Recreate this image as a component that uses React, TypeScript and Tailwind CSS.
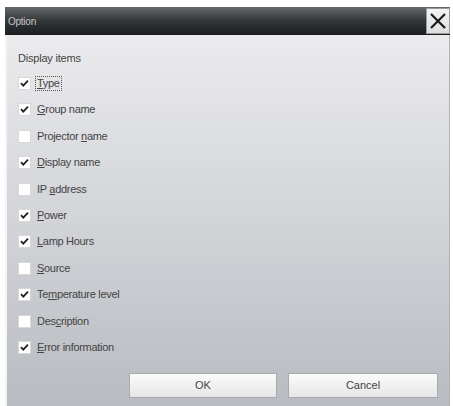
import React from "react";

type Item = { pre: string; key: string; post: string; checked: boolean; focus?: boolean };

const items: Item[] = [
  { pre: "", key: "T", post: "ype", checked: true, focus: true },
  { pre: "", key: "G", post: "roup name", checked: true },
  { pre: "Projector ", key: "n", post: "ame", checked: false },
  { pre: "", key: "D", post: "isplay name", checked: true },
  { pre: "IP ", key: "a", post: "ddress", checked: false },
  { pre: "", key: "P", post: "ower", checked: true },
  { pre: "", key: "L", post: "amp Hours", checked: true },
  { pre: "", key: "S", post: "ource", checked: false },
  { pre: "Te", key: "m", post: "perature level", checked: true },
  { pre: "Des", key: "c", post: "ription", checked: false },
  { pre: "", key: "E", post: "rror information", checked: true },
];

function Check({ checked }: { checked: boolean }) {
  return (
    <div className="w-[13px] h-[13px] bg-white border border-[#d8d8d8] flex items-center justify-center">
      {checked && (
        <svg width="9" height="9" viewBox="0 0 9 9">
          <path d="M1 4.2 L3.3 6.6 L8 1.6" stroke="#222" strokeWidth="1.8" fill="none" />
        </svg>
      )}
    </div>
  );
}

export default function App() {
  return (
    <div
      className="w-[453px] h-[406px] bg-white pt-[7px] pl-[5px] pr-[3px] overflow-hidden"
      style={{ fontFamily: '"Liberation Sans", Arial, sans-serif' }}
    >
      <div className="h-[399px] flex flex-col">
        <div className="h-[28px] flex items-center justify-between bg-gradient-to-b from-[#65696b] via-[#33373a] to-[#1a1e20] pl-[3px]">
          <span className="text-[10px] text-[#c4c6c8] tracking-tight">Option</span>
          <div className="w-[24px] h-[26px] bg-gradient-to-b from-[#f4f4f4] to-[#dedede] border border-[#9a9a9a] flex items-center justify-center">
            <svg width="18" height="18" viewBox="0 0 18 18">
              <path d="M2 2 L16 16 M16 2 L2 16" stroke="#1a1a1a" strokeWidth="2.2" />
            </svg>
          </div>
        </div>
        <div className="flex-1 border-l-2 border-l-[#f4f4f6] border-r border-r-[#b0b2b8] bg-gradient-to-b from-[#ebebed] via-[#d2d4d8] to-[#b8bbc1] pl-[11px] pr-[11px] flex flex-col">
          <div className="text-[11px] text-[#444] mt-[17px] leading-[13px] tracking-[-0.2px]">Display items</div>
          <div className="flex flex-col mt-[12px] gap-[13.4px]">
            {items.map((it, i) => (
              <div key={i} className="flex items-center h-[13px] gap-[5px]">
                <Check checked={it.checked} />
                <span
                  className={
                    "text-[11px] text-[#444] leading-[13px] px-[1px] tracking-[-0.3px] " +
                    (it.focus ? "outline outline-1 outline-dotted outline-[#555]" : "")
                  }
                >
                  {it.pre}
                  <span className="underline underline-offset-1">{it.key}</span>
                  {it.post}
                </span>
              </div>
            ))}
          </div>
          <div className="flex justify-end gap-[11px] mt-[19px] pl-[2px]">
            <button className="w-[148px] h-[25px] bg-gradient-to-b from-[#fbfbfb] to-[#e6e6e8] border border-[#a8aaae] text-[11px] text-[#444] flex items-center justify-center">
              OK
            </button>
            <button className="w-[150px] h-[25px] bg-gradient-to-b from-[#fbfbfb] to-[#e6e6e8] border border-[#a8aaae] text-[11px] text-[#444] flex items-center justify-center">
              Cancel
            </button>
          </div>
        </div>
      </div>
    </div>
  );
}
